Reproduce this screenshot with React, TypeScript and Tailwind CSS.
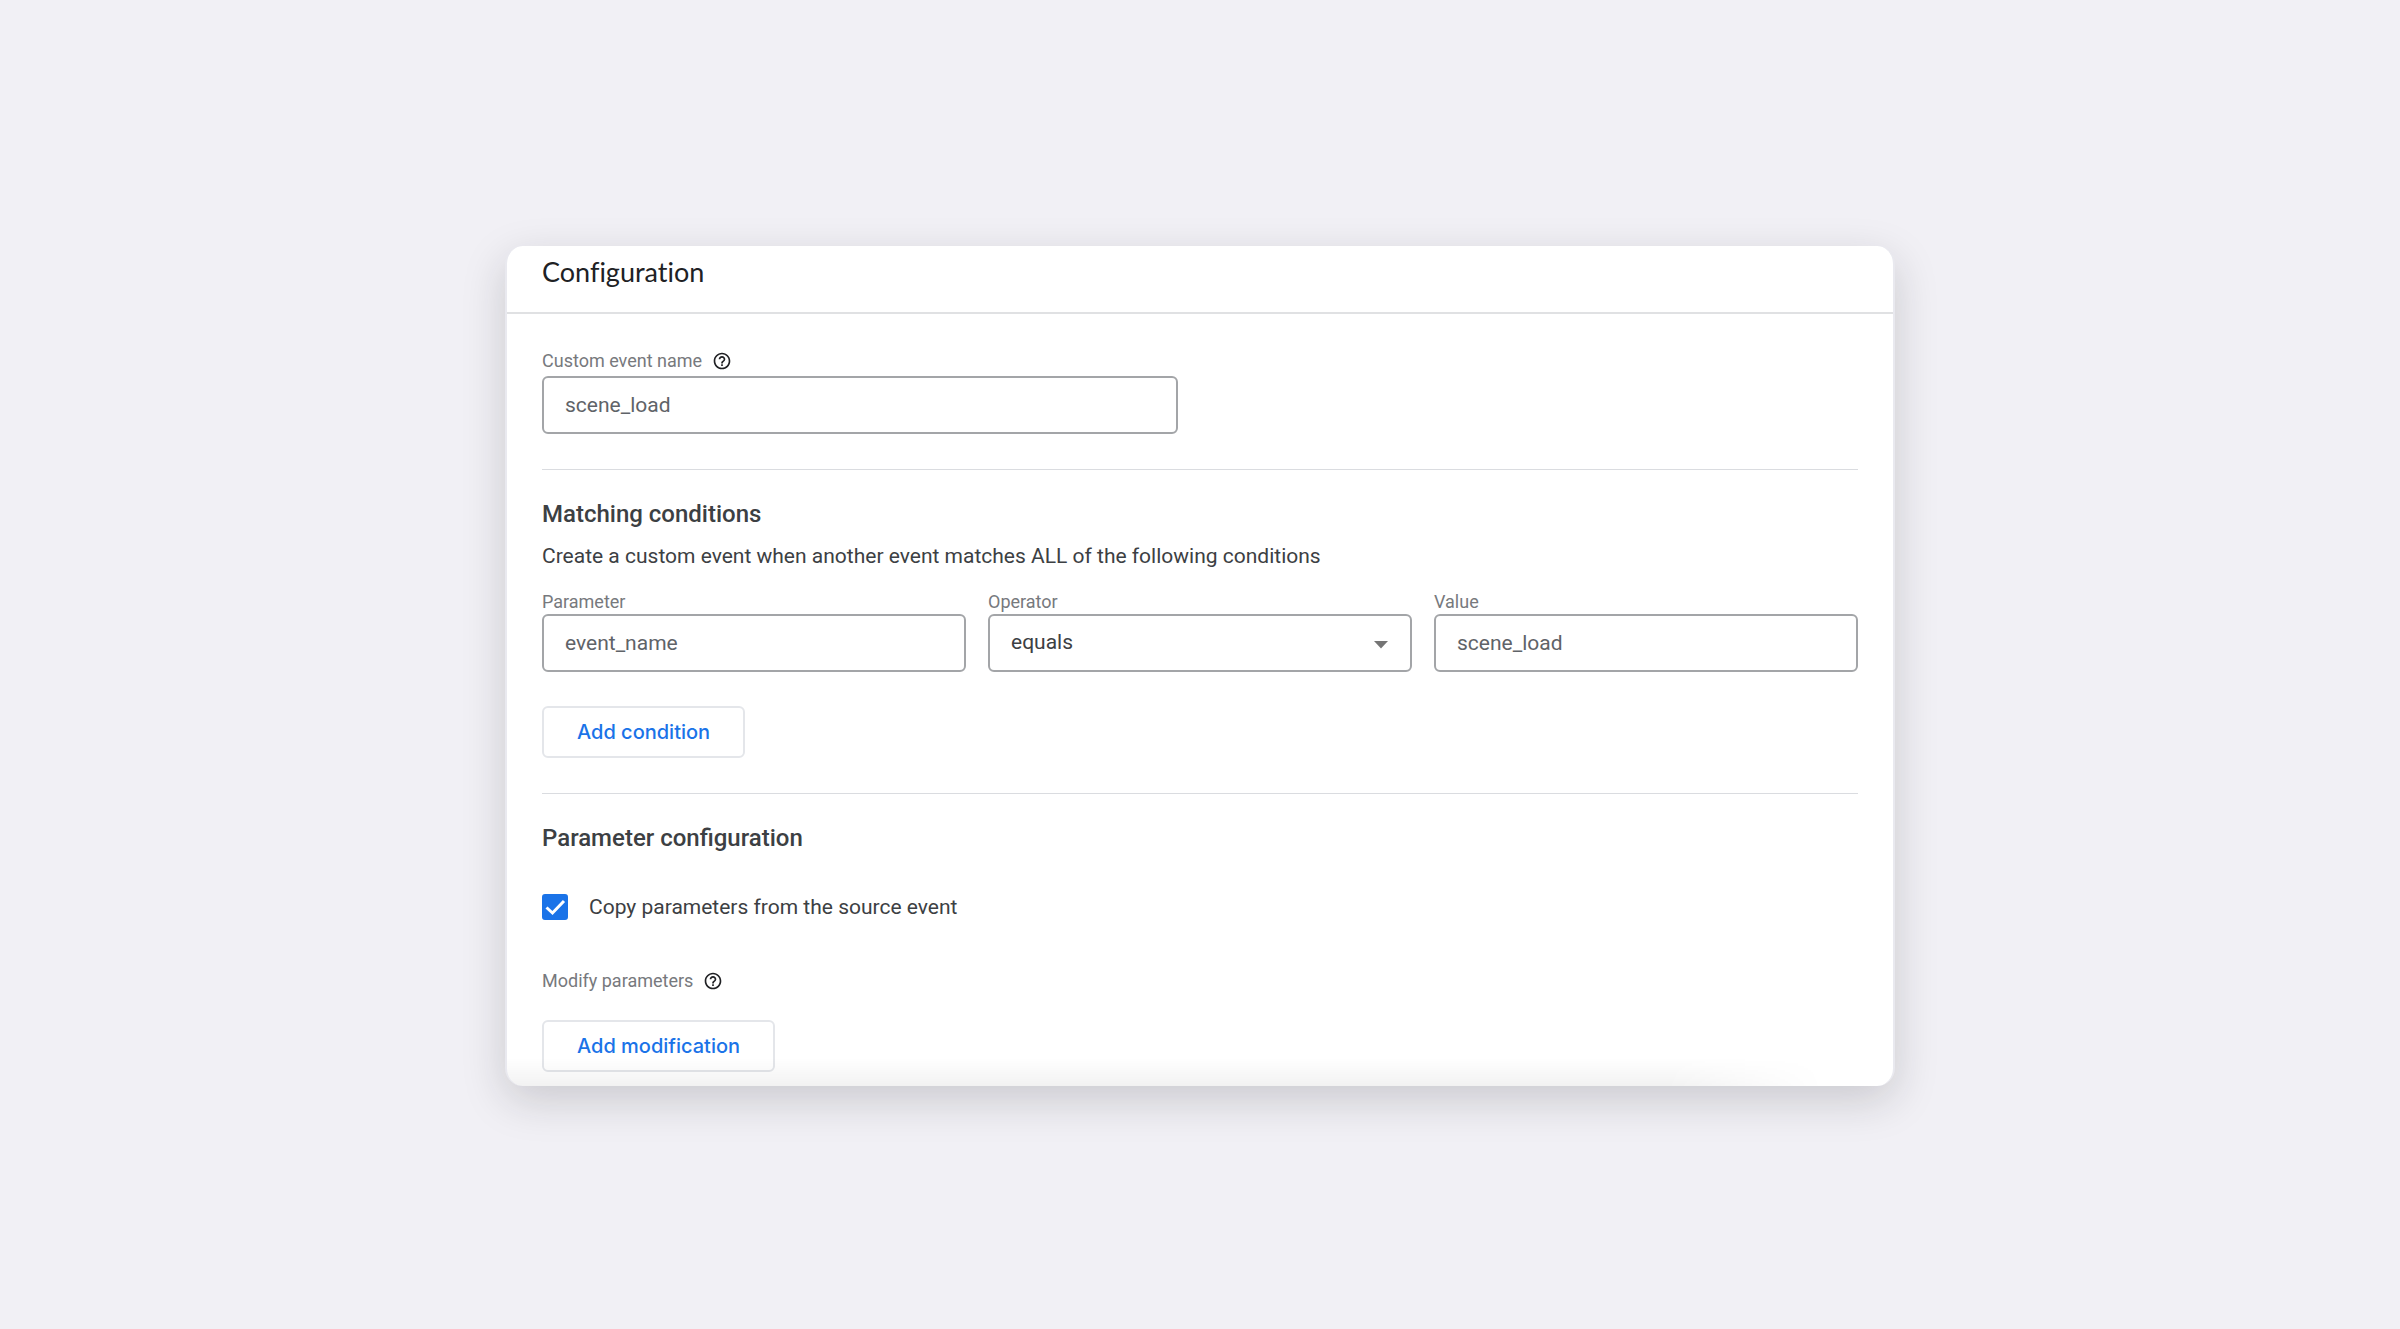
import React, { useState } from 'react';
import { MdHelpOutline } from 'react-icons/md';

const fieldClass =
  'block h-[58px] w-full rounded-md border-2 border-[#a3a5a8] bg-white px-[21px] text-[21px] outline-none focus:border-[#1a73e8]';

function HelpButton({ label }: { label: string }) {
  return (
    <button type="button" aria-label={label} className="text-[#202124]">
      <MdHelpOutline className="size-5" />
    </button>
  );
}

function OutlineButton({ children }: { children: React.ReactNode }) {
  return (
    <button
      type="button"
      className="block h-[52px] rounded-md border-2 border-[#e4e6ea] px-[33px] font-['Inter',sans-serif] text-xl font-medium text-[#1a73e8] hover:bg-[#1a73e8]/5"
    >
      {children}
    </button>
  );
}

export default function App() {
  const [eventName, setEventName] = useState('scene_load');
  const [parameter, setParameter] = useState('event_name');
  const [operator, setOperator] = useState('equals');
  const [value, setValue] = useState('scene_load');
  const [copyParams, setCopyParams] = useState(true);

  return (
    <main className="flex min-h-screen items-center justify-center bg-[#f1f0f5] px-4 pt-[3px] font-['Roboto',sans-serif] text-[#3c4043]">
      <div className="relative w-full max-w-[1390px] overflow-hidden rounded-[18px] border-x-2 border-[#e9e9ef] bg-white shadow-[0_14px_44px_rgba(30,30,36,0.18)]">
        <header className="border-b-2 border-[#e0e1e3] px-[35px] pt-2.5 pb-6">
          <h1 className="font-['Lato',sans-serif] text-[27px] leading-8 text-[#202124] [font-variant-ligatures:none]">
            Configuration
          </h1>
        </header>

        <form className="px-[35px] pt-[35px] pb-3.5" onSubmit={(e) => e.preventDefault()}>
          {/* Event name */}
          <div className="flex items-center gap-2.5 text-lg leading-6 text-[#77797d]">
            <label htmlFor="event-name">Custom event name</label>
            <HelpButton label="About custom event names" />
          </div>
          <input
            id="event-name"
            type="text"
            value={eventName}
            onChange={(e) => setEventName(e.target.value)}
            className={`${fieldClass} mt-[3px] max-w-[636px] text-[#5f6368]`}
          />

          {/* Matching conditions */}
          <section className="mt-[35px] border-t border-[#dadce0] pt-[30px]">
            <h2 className="text-2xl leading-7 font-medium">Matching conditions</h2>
            <p className="mt-3.5 text-[21px] leading-7">
              Create a custom event when another event matches ALL of the following conditions
            </p>
            <div className="mt-5 grid grid-cols-1 gap-[22px] md:grid-cols-3">
              <div>
                <label htmlFor="parameter" className="block text-lg leading-6 text-[#77797d]">Parameter</label>
                <input
                  id="parameter"
                  type="text"
                  value={parameter}
                  onChange={(e) => setParameter(e.target.value)}
                  className={`${fieldClass} text-[#5f6368]`}
                />
              </div>
              <div>
                <label htmlFor="operator" className="block text-lg leading-6 text-[#77797d]">Operator</label>
                <div className="relative">
                  <select
                    id="operator"
                    value={operator}
                    onChange={(e) => setOperator(e.target.value)}
                    className={`${fieldClass} appearance-none text-[#3c4043]`}
                  >
                    <option>equals</option>
                    <option>contains</option>
                    <option>starts with</option>
                    <option>ends with</option>
                  </select>
                  <svg viewBox="0 0 14 8" className="pointer-events-none absolute top-[27px] right-6 h-2 w-3.5 fill-[#757575]">
                    <path d="M0 0h14L7 7.5z" />
                  </svg>
                </div>
              </div>
              <div>
                <label htmlFor="value" className="block text-lg leading-6 text-[#77797d]">Value</label>
                <input
                  id="value"
                  type="text"
                  value={value}
                  onChange={(e) => setValue(e.target.value)}
                  className={`${fieldClass} text-[#5f6368]`}
                />
              </div>
            </div>
            <div className="mt-[34px]">
              <OutlineButton>Add condition</OutlineButton>
            </div>
          </section>

          {/* Parameter configuration */}
          <section className="mt-[35px] border-t border-[#dadce0] pt-[30px]">
            <h2 className="text-2xl leading-7 font-medium">Parameter configuration</h2>
            <div className="mt-[41px] flex items-center gap-[21px]">
              <span className="relative size-[26px]">
                <input
                  id="copy-params"
                  type="checkbox"
                  checked={copyParams}
                  onChange={(e) => setCopyParams(e.target.checked)}
                  className="block size-[26px] appearance-none rounded-[3px] border-2 border-[#5f6368] checked:border-[#1a73e8] checked:bg-[#1a73e8]"
                />
                {copyParams && (
                  <svg viewBox="0 0 26 26" className="pointer-events-none absolute inset-0 fill-none stroke-white stroke-[3]">
                    <path d="M4.5 13.5l6 5.5L22 7" />
                  </svg>
                )}
              </span>
              <label htmlFor="copy-params" className="text-[21px] leading-7">Copy parameters from the source event</label>
            </div>
            <div className="mt-12 flex items-center gap-2.5 text-lg leading-6 text-[#77797d]">
              <span>Modify parameters</span>
              <HelpButton label="About modifying parameters" />
            </div>
            <div className="mt-[27px]">
              <OutlineButton>Add modification</OutlineButton>
            </div>
          </section>
        </form>

        <div className="pointer-events-none absolute bottom-0 left-0 h-7 w-[95%] bg-linear-to-t from-black/5 to-transparent mask-r-from-88%" />
      </div>
    </main>
  );
}
